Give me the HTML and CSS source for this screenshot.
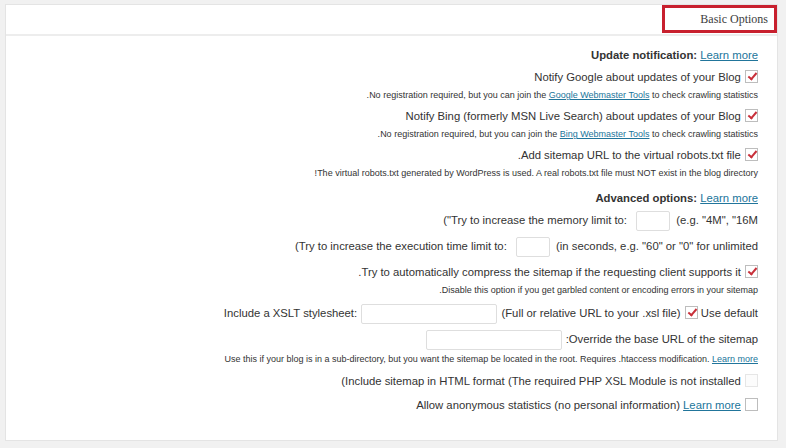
FILE: index.html
```html
<!DOCTYPE html>
<html lang="en">
<head>
    <meta charset="UTF-8">
    <title>Sitemap Settings</title>
    <link rel="stylesheet" href="styles.css">
</head>
<body>
    <div class="postbox" dir="rtl">
        <h3 class="hndle"><span class="hndle-title">Basic Options</span></h3>
        <form class="inside">
            <p class="group-title"><b>Update notification:</b> <a href="#">Learn more</a></p>
            <ul class="options">
                <li>
                    <label><input type="checkbox" class="check" checked> Notify Google about updates of your Blog</label>
                    <small class="hint">No registration required, but you can join the <a href="#">Google Webmaster Tools</a> to check crawling statistics.</small>
                </li>
                <li>
                    <label><input type="checkbox" class="check" checked> Notify Bing (formerly MSN Live Search) about updates of your Blog</label>
                    <small class="hint">No registration required, but you can join the <a href="#">Bing Webmaster Tools</a> to check crawling statistics.</small>
                </li>
                <li>
                    <label><input type="checkbox" class="check" checked> Add sitemap URL to the virtual robots.txt file.</label>
                    <small class="hint">The virtual robots.txt generated by WordPress is used. A real robots.txt file must NOT exist in the blog directory!</small>
                </li>
            </ul>

            <p class="group-title"><b>Advanced options:</b> <a href="#">Learn more</a></p>
            <ul class="options advanced">
                <li class="field-row">
                    <label><span dir="ltr">("Try to increase the memory limit to: <input type="text" class="text small-text"> (e.g. "4M", "16M</span></label>
                </li>
                <li class="field-row">
                    <label><span dir="ltr">(Try to increase the execution time limit to: <input type="text" class="text small-text"> (in seconds, e.g. "60" or "0" for unlimited</span></label>
                </li>
                <li>
                    <label><input type="checkbox" class="check" checked> Try to automatically compress the sitemap if the requesting client supports it.</label>
                    <small class="hint">Disable this option if you get garbled content or encoding errors in your sitemap.</small>
                </li>
                <li class="field-row">
                    <label>Include a XSLT stylesheet: <input type="text" class="text wide-text"> (Full or relative URL to your .xsl file) <input type="checkbox" class="check" checked> Use default</label>
                </li>
                <li class="field-row">
                    <label>Override the base URL of the sitemap: <input type="text" class="text wide-text"></label>
                    <small class="hint">Use this if your blog is in a sub-directory, but you want the sitemap be located in the root. Requires .htaccess modification. <a href="#">Learn more</a></small>
                </li>
                <li class="check-row">
                    <label><input type="checkbox" class="check" disabled> <span dir="ltr">(Include sitemap in HTML format (The required PHP XSL Module is not installed</span></label>
                </li>
                <li class="check-row">
                    <label><input type="checkbox" class="check"> Allow anonymous statistics (no personal information) <a href="#">Learn more</a></label>
                </li>
            </ul>
        </form>
    </div>
</body>
</html>
```

FILE: styles.css
```css
body {
    margin: 0;
    background-color: #f1f1f1;
    font-family: "Liberation Sans", Arial, sans-serif;
    color: #333;
}

.postbox {
    margin: 4px 8px 8px 5px;
    background-color: #fff;
    border: 1px solid #e4e4e4;
}

/* box header with the highlighted title */
.hndle {
    display: flex;
    margin: 0;
    height: 29px;
    border-bottom: 2px solid #ededed;
}

.hndle-title {
    box-sizing: border-box;
    width: 115px;
    height: 28px;
    padding: 0 6px;
    border: 3px solid #c8202e;
    font-family: "Liberation Serif", "Times New Roman", serif;
    font-size: 12px;
    font-weight: normal;
    line-height: 22px;
    color: #3c3c3c;
}

.inside {
    padding: 9px 19px 24px;
    font-size: 11.3px;
    line-height: 20px;
}

a {
    color: #21759b;
}

.group-title {
    margin: 6px 0 0;
}

.group-title:first-child {
    margin-top: 0;
}

.options {
    margin: 2px 0 0;
    padding: 0;
    list-style: none;
}

.options.advanced {
    margin-top: 0;
}

.options li {
    margin-bottom: 2px;
}

.options li:last-child {
    margin-bottom: 0;
}

.field-row + li:not([class]) {
    padding-top: 2px;
}

.hint {
    display: block;
    font-size: 9px;
    line-height: 17px;
}

.field-row label {
    display: block;
    line-height: 24px;
}

.check-row label {
    display: block;
    line-height: 22px;
}

/* text fields */
.text {
    box-sizing: border-box;
    height: 20px;
    margin: 0 1px;
    padding: 0 3px;
    border: 1px solid #dedede;
    border-radius: 2px;
    background-color: #fff;
    vertical-align: middle;
    font: inherit;
}

.small-text {
    width: 34px;
    margin: 0 3px 0 6px;
}

.wide-text {
    width: 136px;
}

/* checkboxes with a red tick */
.check {
    appearance: none;
    -webkit-appearance: none;
    position: relative;
    box-sizing: border-box;
    width: 13px;
    height: 13px;
    margin: 0 0 0 1px;
    border: 1px solid #bdbdbd;
    background-color: #fff;
    vertical-align: -2px;
}

.check:checked::before {
    content: "";
    position: absolute;
    left: 4px;
    top: 0;
    width: 3px;
    height: 7px;
    border: solid #c8303a;
    border-width: 0 2px 2px 0;
    transform: rotate(40deg);
}

.check:disabled {
    border-color: #e6e6e6;
    background-color: #fcfcfc;
}
```
